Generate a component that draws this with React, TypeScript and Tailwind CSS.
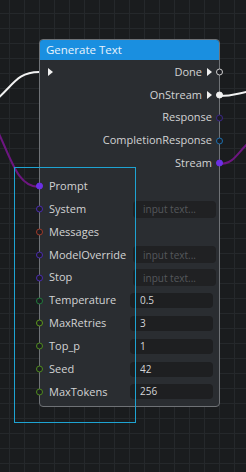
import React from "react";

type Pin = { color: string; filled?: boolean };

type Row = {
  left?: { label: string; pin: Pin; input?: "text" | "number"; value?: string };
  right?: { label: string; pin: Pin; exec?: boolean };
  leftExec?: boolean;
};

const rows: Row[] = [
  { leftExec: true, right: { label: "Done", pin: { color: "#cfcfcf" }, exec: true } },
  { right: { label: "OnStream", pin: { color: "#f2f2f2", filled: true }, exec: true } },
  { right: { label: "Response", pin: { color: "#3b2688" } } },
  { right: { label: "CompletionResponse", pin: { color: "#1b6fae" } } },
  { right: { label: "Stream", pin: { color: "#6c30e6", filled: true } } },
  { left: { label: "Prompt", pin: { color: "#6c30e6", filled: true } } },
  { left: { label: "System", pin: { color: "#4b2bb0" }, input: "text" } },
  { left: { label: "Messages", pin: { color: "#a23b29" } } },
  { left: { label: "ModelOverride", pin: { color: "#4b2bb0" }, input: "text" } },
  { left: { label: "Stop", pin: { color: "#4b2bb0" }, input: "text" } },
  { left: { label: "Temperature", pin: { color: "#217c3c" }, input: "number", value: "0.5" } },
  { left: { label: "MaxRetries", pin: { color: "#5e9a1c" }, input: "number", value: "3" } },
  { left: { label: "Top_p", pin: { color: "#4f8c1d" }, input: "number", value: "1" } },
  { left: { label: "Seed", pin: { color: "#4f8c1d" }, input: "number", value: "42" } },
  { left: { label: "MaxTokens", pin: { color: "#4f8c1d" }, input: "number", value: "256" } },
];

function PinDot({ pin, side }: { pin: Pin; side: "left" | "right" }) {
  return (
    <span
      className={
        "absolute top-1/2 -translate-y-1/2 w-[7px] h-[7px] rounded-full border-[1.5px] " +
        (side === "left" ? "left-[-4px]" : "right-[-4px]")
      }
      style={{ borderColor: pin.color, backgroundColor: pin.filled ? pin.color : "#1c1d22" }}
    />
  );
}

function ExecArrow() {
  return <span className="w-0 h-0 border-y-[4px] border-y-transparent border-l-[5px] border-l-[#f0f0f0]" />;
}

export default function App() {
  return (
    <div
      className="relative w-[246px] h-[472px] overflow-hidden bg-[#1a1c1e] bg-[linear-gradient(to_right,#25282b_1px,transparent_1px),linear-gradient(to_bottom,#25282b_1px,transparent_1px)] bg-[size:15px_15px] bg-[position:9px_13px]"
      style={{ fontFamily: '"Open Sans", "Noto Sans", sans-serif' }}
    >
      {/* wires */}
      <svg className="absolute inset-0" width="246" height="472" fill="none">
        <path d="M -12 106 C 12 90, 14 72, 39 72" stroke="#f2f2f2" strokeWidth="2" />
        <path d="M 219 96 C 234 96, 238 93, 252 91" stroke="#f2f2f2" strokeWidth="2" />
        <path d="M 39 187 C 14 187, 10 150, -12 112" stroke="#6d1680" strokeWidth="2" />
        <path d="M 219 164 C 236 164, 238 150, 252 140" stroke="#6d1680" strokeWidth="2" />
      </svg>

      {/* node */}
      <div className="absolute left-[39px] top-[39px] w-[181px] h-[368px] rounded-[4px] border border-[#6f7276] bg-[#2a2d31]">
        <div className="h-[20px] rounded-t-[3px] bg-[#1a8fe0] pl-[6px] flex items-center text-[11.5px] text-[#e9f3fc]">
          Generate Text
        </div>
        <div className="flex flex-col pt-[0.5px]">
          {rows.map((r, i) => (
            <div key={i} className="relative h-[22.86px] flex items-center text-[11px] text-[#d2d3d4]">
              {r.leftExec && (
                <div className="pl-[8px] flex items-center">
                  <ExecArrow />
                </div>
              )}
              {r.left && (
                <>
                  <PinDot pin={r.left.pin} side="left" />
                  <span className="pl-[9px]">{r.left.label}</span>
                  {r.left.input === "text" && (
                    <input
                      readOnly
                      placeholder="input text..."
                      className="ml-auto mr-[3px] w-[83px] h-[17px] rounded-[4px] bg-[#202123] pl-[10px] text-[10px] text-[#c9cacb] outline-none placeholder:text-[#55585c]"
                    />
                  )}
                  {r.left.input === "number" && (
                    <input
                      readOnly
                      value={r.left.value}
                      className="ml-auto mr-[6px] w-[83px] h-[15px] rounded-[4px] bg-[#1e1f21] pl-[10px] text-[10px] text-[#d4d5d6] outline-none"
                    />
                  )}
                </>
              )}
              {r.right && (
                <>
                  <div className="ml-auto pr-[7px] flex items-center gap-[5px]">
                    <span>{r.right.label}</span>
                    {r.right.exec && <ExecArrow />}
                  </div>
                  <PinDot pin={r.right.pin} side="right" />
                </>
              )}
            </div>
          ))}
        </div>
      </div>

      {/* selection box */}
      <div className="absolute left-[14px] top-[167px] w-[122px] h-[256px] border border-[#1ea3d2] pointer-events-none" />
    </div>
  );
}
